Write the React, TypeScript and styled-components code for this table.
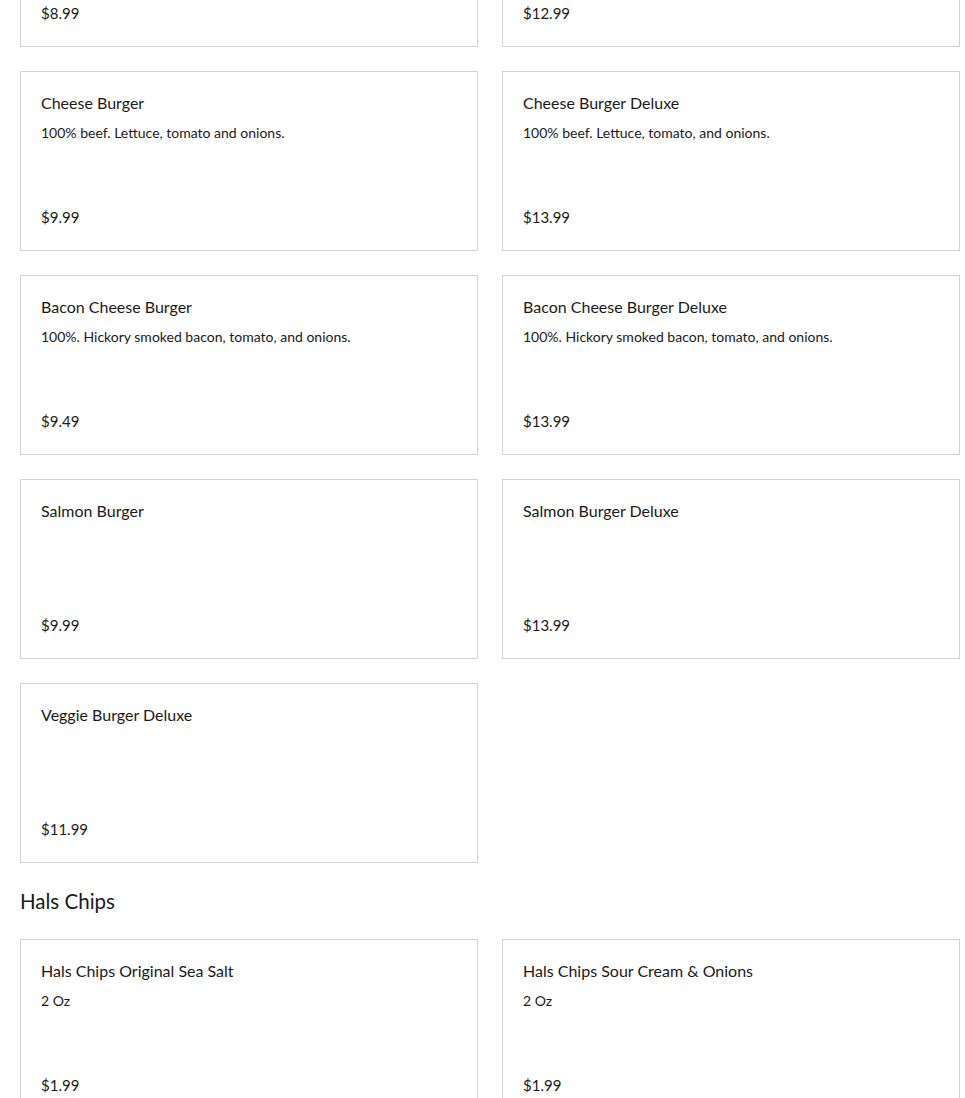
import React from "react";
import styled, { createGlobalStyle } from "styled-components";

const GlobalStyle = createGlobalStyle`
  html, body { margin: 0; padding: 0; background: #fff; }
  body { font-family: "Lato", "Open Sans", sans-serif; color: #1a1a1a; overflow: hidden; }
`;

const Page = styled.div`
  width: 940px;
  margin: -133px 0 0 20px;
  display: flex;
  flex-direction: column;
`;

const Grid = styled.div`
  display: grid;
  grid-template-columns: 1fr 1fr;
  gap: 24px;
`;

const Card = styled.div`
  box-sizing: border-box;
  height: 180px;
  border: 1px solid #d2d2d2;
  padding: 20px 20px 22px;
  display: flex;
  flex-direction: column;
`;

const Title = styled.div`
  font-size: 16px;
  line-height: 22px;
`;

const Desc = styled.div`
  font-size: 14px;
  line-height: 22px;
  margin-top: 8px;
`;

const Price = styled.div`
  font-size: 15px;
  line-height: 22px;
  margin-top: auto;
`;

const Heading = styled.h2`
  margin: 24px 0;
  font-size: 20.5px;
  font-weight: 400;
  line-height: 28px;
`;

type Item = { name: string; desc?: string; price: string };

const burgers: Item[] = [
  { name: "Hamburger", price: "$8.99" },
  { name: "Hamburger Deluxe", price: "$12.99" },
  { name: "Cheese Burger", desc: "100% beef. Lettuce, tomato and onions.", price: "$9.99" },
  { name: "Cheese Burger Deluxe", desc: "100% beef. Lettuce, tomato, and onions.", price: "$13.99" },
  { name: "Bacon Cheese Burger", desc: "100%. Hickory smoked bacon, tomato, and onions.", price: "$9.49" },
  { name: "Bacon Cheese Burger Deluxe", desc: "100%. Hickory smoked bacon, tomato, and onions.", price: "$13.99" },
  { name: "Salmon Burger", price: "$9.99" },
  { name: "Salmon Burger Deluxe", price: "$13.99" },
  { name: "Veggie Burger Deluxe", price: "$11.99" },
];

const chips: Item[] = [
  { name: "Hals Chips Original Sea Salt", desc: "2 Oz", price: "$1.99" },
  { name: "Hals Chips Sour Cream & Onions", desc: "2 Oz", price: "$1.99" },
];

const MenuCard = ({ item }: { item: Item }) => (
  <Card>
    <Title>{item.name}</Title>
    {item.desc && <Desc>{item.desc}</Desc>}
    <Price>{item.price}</Price>
  </Card>
);

export default function App() {
  return (
    <>
      <GlobalStyle />
      <Page>
        <Grid>
          {burgers.map((b) => (
            <MenuCard key={b.name} item={b} />
          ))}
        </Grid>
        <Heading>Hals Chips</Heading>
        <Grid>
          {chips.map((c) => (
            <MenuCard key={c.name} item={c} />
          ))}
        </Grid>
      </Page>
    </>
  );
}
